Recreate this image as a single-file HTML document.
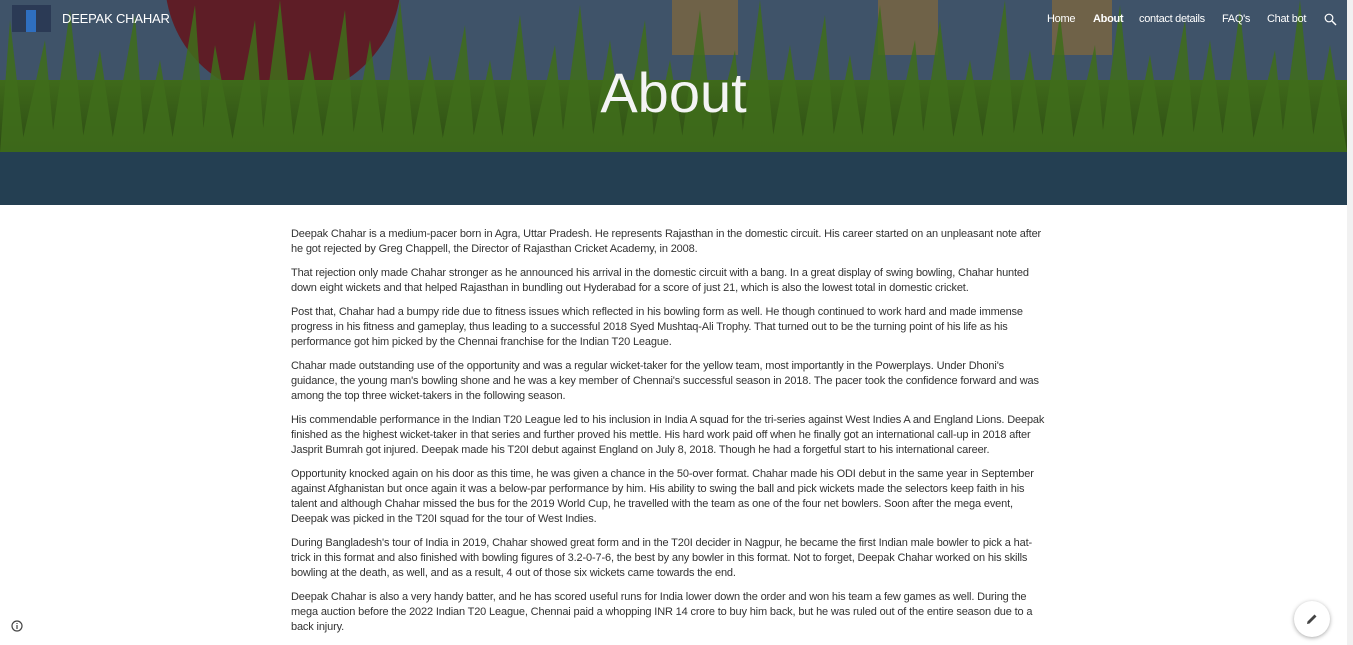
<!DOCTYPE html>
<html><head><meta charset="utf-8"><style>
html,body{margin:0;padding:0;width:1353px;height:645px;overflow:hidden;background:#fff;font-family:"Liberation Sans",Arial,sans-serif}
#banner{position:absolute;left:0;top:0;width:1347px;height:205px;background:#243f52;overflow:hidden}
#sky{position:absolute;left:0;top:0;width:1347px;height:152px;background:#3f5369;overflow:hidden}
#scroll{position:absolute;left:1347px;top:0;width:6px;height:645px;background:#f1f1f1}
.nav{position:absolute;top:13px;color:#fff;font-size:11px;letter-spacing:-0.3px}
#title{position:absolute;left:0;width:1347px;top:60px;text-align:center;color:#f4f4f4;font-size:56px;font-weight:normal;letter-spacing:0px}
#content{position:absolute;left:291px;top:227px;font-size:11px;line-height:15px;color:#333;white-space:nowrap;letter-spacing:-0.15px}
#content p{margin:0 0 9px 0}
</style></head><body>
<div id="banner">
<div id="sky">
<svg width="1347" height="152" style="position:absolute;left:0;top:0">
<defs><linearGradient id="g" x1="0" y1="0" x2="0" y2="1"><stop offset="0" stop-color="#3f6a1a"/><stop offset="1" stop-color="#2c4a14"/></linearGradient></defs>
<circle cx="283" cy="-20" r="118" fill="#5e1d26"/>
<rect x="672" y="0" width="66" height="55" fill="#6f6248"/>
<rect x="878" y="0" width="60" height="55" fill="#6f6248"/>
<rect x="1052" y="0" width="60" height="55" fill="#6f6248"/>
<rect x="0" y="80" width="1347" height="72" fill="url(#g)"/>
<g fill="#3f6d1b" opacity="0.85">
<path d="M0 152 L10 20 L25 152Z M20 152 L45 40 L55 152Z M50 152 L70 10 L85 152Z M80 152 L100 50 L115 152Z M110 152 L135 15 L145 152Z M140 152 L160 60 L175 152Z M170 152 L195 5 L205 152Z M200 152 L215 45 L235 152Z M230 152 L255 20 L265 152Z M260 152 L280 0 L295 152Z M290 152 L310 50 L325 152Z M320 152 L345 10 L355 152Z M350 152 L370 40 L385 152Z M380 152 L400 0 L415 152Z M410 152 L430 55 L445 152Z M440 152 L465 25 L475 152Z M470 152 L490 60 L505 152Z M500 152 L520 15 L535 152Z M530 152 L555 45 L565 152Z M560 152 L580 5 L595 152Z M590 152 L610 40 L625 152Z M620 152 L645 20 L655 152Z M650 152 L670 60 L685 152Z M680 152 L700 10 L715 152Z M710 152 L735 50 L745 152Z M740 152 L760 0 L775 152Z M770 152 L790 45 L805 152Z M800 152 L825 15 L835 152Z M830 152 L850 55 L865 152Z M860 152 L880 5 L895 152Z M890 152 L915 40 L925 152Z M920 152 L940 20 L955 152Z M950 152 L970 60 L985 152Z M980 152 L1005 0 L1015 152Z M1010 152 L1030 50 L1045 152Z M1040 152 L1060 15 L1075 152Z M1070 152 L1095 45 L1105 152Z M1100 152 L1120 5 L1135 152Z M1130 152 L1150 55 L1165 152Z M1160 152 L1185 20 L1195 152Z M1190 152 L1210 40 L1225 152Z M1220 152 L1240 10 L1255 152Z M1250 152 L1275 50 L1285 152Z M1280 152 L1300 0 L1315 152Z M1310 152 L1330 45 L1347 152Z"/>
</g>
</svg>
</div>
<div style="position:absolute;left:12px;top:5px;width:39px;height:27px;background:#2b3a55"><div style="position:absolute;left:14px;top:5px;width:10px;height:22px;background:#2f6fc0"></div></div>
<div class="nav" style="left:62px;top:11px;font-size:13px;letter-spacing:-0.2px">DEEPAK CHAHAR</div>
<div class="nav" style="left:1047px">Home</div>
<div class="nav" style="left:1093px;font-weight:bold">About</div>
<div class="nav" style="left:1139px">contact details</div>
<div class="nav" style="left:1222px">FAQ's</div>
<div class="nav" style="left:1267px">Chat bot</div>
<svg style="position:absolute;left:1324px;top:13px" width="13" height="13"><circle cx="5" cy="5" r="3.8" stroke="#fff" stroke-width="1.2" fill="none"/><path d="M8 8 L12 12" stroke="#fff" stroke-width="1.4"/></svg>
<div id="title">About</div>
</div>
<div id="scroll"></div>
<div id="content">
<p>Deepak Chahar is a medium-pacer born in Agra, Uttar Pradesh. He represents Rajasthan in the domestic circuit. His career started on an unpleasant note after<br>he got rejected by Greg Chappell, the Director of Rajasthan Cricket Academy, in 2008.</p>
<p>That rejection only made Chahar stronger as he announced his arrival in the domestic circuit with a bang. In a great display of swing bowling, Chahar hunted<br>down eight wickets and that helped Rajasthan in bundling out Hyderabad for a score of just 21, which is also the lowest total in domestic cricket.</p>
<p>Post that, Chahar had a bumpy ride due to fitness issues which reflected in his bowling form as well. He though continued to work hard and made immense<br>progress in his fitness and gameplay, thus leading to a successful 2018 Syed Mushtaq-Ali Trophy. That turned out to be the turning point of his life as his<br>performance got him picked by the Chennai franchise for the Indian T20 League.</p>
<p>Chahar made outstanding use of the opportunity and was a regular wicket-taker for the yellow team, most importantly in the Powerplays. Under Dhoni's<br>guidance, the young man's bowling shone and he was a key member of Chennai's successful season in 2018. The pacer took the confidence forward and was<br>among the top three wicket-takers in the following season.</p>
<p>His commendable performance in the Indian T20 League led to his inclusion in India A squad for the tri-series against West Indies A and England Lions. Deepak<br>finished as the highest wicket-taker in that series and further proved his mettle. His hard work paid off when he finally got an international call-up in 2018 after<br>Jasprit Bumrah got injured. Deepak made his T20I debut against England on July 8, 2018. Though he had a forgetful start to his international career.</p>
<p>Opportunity knocked again on his door as this time, he was given a chance in the 50-over format. Chahar made his ODI debut in the same year in September<br>against Afghanistan but once again it was a below-par performance by him. His ability to swing the ball and pick wickets made the selectors keep faith in his<br>talent and although Chahar missed the bus for the 2019 World Cup, he travelled with the team as one of the four net bowlers. Soon after the mega event,<br>Deepak was picked in the T20I squad for the tour of West Indies.</p>
<p>During Bangladesh's tour of India in 2019, Chahar showed great form and in the T20I decider in Nagpur, he became the first Indian male bowler to pick a hat-<br>trick in this format and also finished with bowling figures of 3.2-0-7-6, the best by any bowler in this format. Not to forget, Deepak Chahar worked on his skills<br>bowling at the death, as well, and as a result, 4 out of those six wickets came towards the end.</p>
<p>Deepak Chahar is also a very handy batter, and he has scored useful runs for India lower down the order and won his team a few games as well. During the<br>mega auction before the 2022 Indian T20 League, Chennai paid a whopping INR 14 crore to buy him back, but he was ruled out of the entire season due to a<br>back injury.</p>
</div>
<svg style="position:absolute;left:11px;top:620px" width="12" height="12"><circle cx="6" cy="6" r="5" stroke="#444" stroke-width="1.2" fill="none"/><path d="M6 5 V9 M6 3 V4" stroke="#444" stroke-width="1.2"/></svg>
<div style="position:absolute;left:1294px;top:601px;width:36px;height:36px;border-radius:50%;background:#fff;box-shadow:0 1px 4px rgba(0,0,0,.35)">
<svg style="position:absolute;left:11px;top:11px" width="14" height="14"><path d="M2 12 L2.5 9.5 L9.5 2.5 L11.5 4.5 L4.5 11.5Z" fill="#444"/></svg></div>
</body></html>
